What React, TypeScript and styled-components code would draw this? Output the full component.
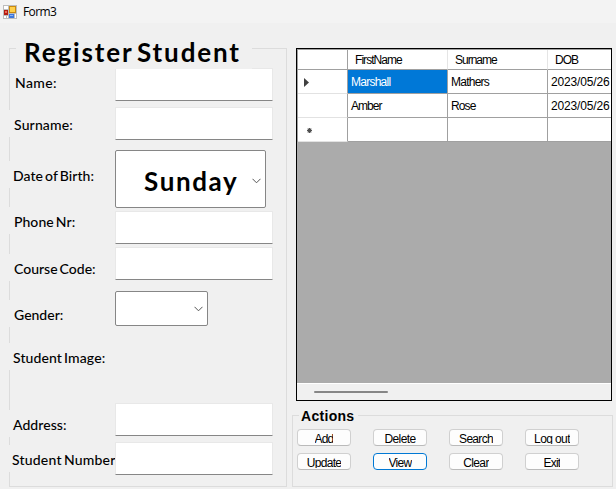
import React from "react";
import styled, { createGlobalStyle } from "styled-components";

const GlobalStyle = createGlobalStyle`
  * { box-sizing: border-box; }
  html, body { margin: 0; overflow: hidden; background: #f0f0f0; }
  button, input { font: inherit; color: inherit; margin: 0; }
`;

const line = "#dcdcdc";
const gridLine = "#a0a0a0";

const Window = styled.div`
  width: 616px;
  height: 489px;
  display: flex;
  flex-direction: column;
  background: #f0f0f0;
  color: #000;
  font-family: "Liberation Sans", Arial, sans-serif;
  font-size: 12px;
  white-space: nowrap;
  overflow: hidden;
`;

const TitleBar = styled.header`
  height: 23px;
  flex: none;
  display: flex;
  align-items: center;
  gap: 6px;
  padding-left: 3px;
  background: #f3f3f3;
  font: 12px/22px "Open Sans", sans-serif;
  letter-spacing: -0.6px;
`;

const Body = styled.main`
  flex: 1;
  display: flex;
  align-items: flex-start;
`;

const Text = styled.span<{ $spacing: number }>`
  letter-spacing: ${(p) => p.$spacing}px;
`;

/* Register form */
const RegisterGroup = styled.section`
  width: 278px;
  height: 439px;
  margin: 25px 0 0 9px;
  display: flex;
  border: 1px solid ${line};
  font-family: Lato, sans-serif;
  position: relative;
`;

const RegisterLegend = styled.h1`
  position: absolute;
  left: 6px;
  top: -14px;
  width: 236px;
  height: 34px;
  margin: 0;
  padding-left: 8px;
  background: #f0f0f0;
  font: bold 26px/34px Lato, sans-serif;
  letter-spacing: 1.85px;
  word-spacing: -4px;
`;

const LabelColumn = styled.div`
  width: 107px;
  flex: none;
  margin-left: -2px;
  padding-top: 19px;
  display: flex;
  flex-direction: column;
`;

const Label = styled.label<{ $gap?: number; $indent: number; $spacing: number; $inside?: boolean }>`
  height: 27px;
  flex: none;
  margin-top: ${(p) => p.$gap ?? 0}px;
  margin-left: ${(p) => (p.$inside ? 3 : 0)}px;
  padding-left: ${(p) => p.$indent - (p.$inside ? 3 : 0)}px;
  background: #f0f0f0;
  font: 500 14px/30px Lato, sans-serif;
  letter-spacing: ${(p) => p.$spacing}px;
  word-spacing: -1.5px;
`;

const FieldColumn = styled.div`
  padding-top: 19px;
  display: flex;
  flex-direction: column;
  align-items: flex-start;
`;

const Input = styled.input<{ $gap?: number }>`
  width: 158px;
  height: 33px;
  flex: none;
  margin-top: ${(p) => p.$gap ?? 0}px;
  border: 1px solid #e8e8e8;
  border-bottom-color: #868686;
  border-radius: 1px;
  background: #fff;
  outline: none;
`;

const DropBox = styled.div<{ $width: number; $height: number; $gap: number; $drop?: number }>`
  width: ${(p) => p.$width}px;
  height: ${(p) => p.$height}px;
  flex: none;
  margin-top: ${(p) => p.$gap}px;
  padding: ${(p) => p.$drop ?? 0}px 4px 0 28px;
  display: flex;
  align-items: center;
  justify-content: space-between;
  border: 1px solid #868686;
  border-radius: 2px;
  background: #fff;
  font: bold 26px/34px Lato, sans-serif;
  letter-spacing: 1.6px;
`;

const Chevron = () => (
  <svg width="9" height="6" viewBox="0 0 9 6" fill="none" stroke="#555" strokeWidth="1">
    <path d="M0.5 0.8 4.5 4.8 8.5 0.8" />
  </svg>
);

/* Right side */
const RightSide = styled.div`
  width: 321px;
  flex: none;
  margin: 25px 0 0 5px;
  display: flex;
  flex-direction: column;
`;

const GridView = styled.section`
  width: 316px;
  height: 353px;
  margin-left: 4px;
  display: flex;
  flex-direction: column;
  border: 1px solid #000;
  background: #ababab;
  overflow: hidden;
`;

const Table = styled.div`
  display: grid;
  grid-template-columns: 50px 100px 100px 63px;
  grid-template-rows: 20px 24px 24px 24px;
  border-top: 1px solid ${gridLine};
  border-left: 1px solid ${gridLine};
`;

const Cell = styled.div<{ $selected?: boolean }>`
  display: flex;
  align-items: center;
  padding: 1px 0 0 3px;
  border-right: 1px solid ${gridLine};
  border-bottom: 1px solid ${gridLine};
  background: ${(p) => (p.$selected ? "#0078d7" : "#fff")};
  color: ${(p) => (p.$selected ? "#fff" : "#000")};
  overflow: hidden;
  &:nth-child(4n) { border-right: 0; }
`;

const HeadCell = styled(Cell)`
  padding: 0 0 0 7px;
  border-right-color: #e5e5e5;
  &:first-child { border-right-color: ${gridLine}; }
`;

const RowHead = styled(Cell)`
  padding: 2px 0 0 6px;
  border-bottom-color: #e2e2e2;
`;

const ScrollBar = styled.div`
  height: 17px;
  margin-top: auto;
  padding: 7px 0 0 17px;
  border-top: 1px solid #fff;
  background: #f0f0f0;
`;

const Thumb = styled.div`
  width: 74px;
  height: 2px;
  border-radius: 1px;
  background: #868686;
`;

const Actions = styled.section`
  width: 321px;
  height: 72px;
  margin-top: 14px;
  padding: 13px 0 0 4px;
  border: 1px solid ${line};
  position: relative;
`;

const ActionsLegend = styled.h2`
  position: absolute;
  left: 6px;
  top: -9px;
  width: 59px;
  margin: 0;
  padding-left: 2px;
  background: #f0f0f0;
  font: bold 14px/19px "Liberation Sans", Arial, sans-serif;
  letter-spacing: 0.3px;
`;

const ButtonGrid = styled.div`
  display: grid;
  grid-template-columns: repeat(4, 54px);
  grid-auto-rows: 17px;
  gap: 7px 22px;
`;

const Button = styled.button<{ $focused?: boolean }>`
  padding: 3px 0 0;
  display: flex;
  justify-content: center;
  border: 1px solid ${(p) => (p.$focused ? "#0078d4" : "#d0d0d0")};
  border-bottom-color: ${(p) => (p.$focused ? "#0078d4" : "#bababa")};
  border-radius: 4px;
  background: #fdfdfd;
`;

const Caption = styled(Text)`
  height: 11px;
  line-height: 13px;
  overflow: hidden;
`;

const FormIcon = () => (
  <svg width="14" height="14" viewBox="0 0 14 14">
    <rect width="14" height="14" fill="#bdbdbd" />
    <path d="M1 1h4v3H1zM1 11h2v2H1zM4 11h1v2H4zM12 9h1v4h-1z" fill="#fff" />
    <rect x="6" y="1" width="7" height="7" fill="#c98a10" />
    <rect x="7" y="2" width="5" height="5" fill="#ffd04a" />
    <rect x="1" y="5" width="4" height="5" fill="#b51d12" />
    <rect x="2" y="6" width="2" height="2" fill="#ec6a55" />
    <rect x="6" y="9" width="5" height="4" fill="#3f78dc" />
    <rect x="7" y="10" width="3" height="1" fill="#8db4f5" />
  </svg>
);

const Arrow = () => (
  <svg width="6" height="9" viewBox="0 0 6 9"><path d="M0 0 5 4.5 0 9z" fill="#404040" /></svg>
);

const NewRowMark = () => (
  <svg width="7" height="7" viewBox="0 0 7 7" stroke="#505050" strokeWidth="1.2">
    <path d="M3.5 1v5M1 3.5h5M1.7 1.7l3.6 3.6M5.3 1.7 1.7 5.3" />
  </svg>
);

const MarkSlot = styled.span<{ $x: number }>`
  display: flex;
  padding-left: ${(p) => p.$x}px;
`;

const buttons: { text: string; spacing: number }[] = [
  { text: "Add", spacing: -0.8 },
  { text: "Delete", spacing: -0.6 },
  { text: "Search", spacing: -0.7 },
  { text: "Log out", spacing: -0.6 },
  { text: "Update", spacing: -0.7 },
  { text: "View", spacing: -0.7 },
  { text: "Clear", spacing: -0.6 },
  { text: "Exit", spacing: -0.8 },
];

export default function App() {
  return (
    <>
      <GlobalStyle />
      <Window>
        <TitleBar><FormIcon />Form3</TitleBar>
        <Body>
          <RegisterGroup>
            <LabelColumn>
              <Label $inside $indent={7} $spacing={0.4}>Name:</Label>
              <Label $gap={15} $indent={6} $spacing={0.15}>Surname:</Label>
              <Label $gap={24} $indent={5} $spacing={0.05}>Date of Birth:</Label>
              <Label $gap={19} $indent={6} $spacing={0.05}>Phone Nr:</Label>
              <Label $gap={20} $indent={6} $spacing={0}>Course Code:</Label>
              <Label $gap={19} $indent={6} $spacing={0}>Gender:</Label>
              <Label $gap={16} $indent={5} $spacing={0.1}>Student Image:</Label>
              <Label $gap={40} $indent={5} $spacing={0.05}>Address:</Label>
              <Label $gap={8} $indent={4} $spacing={0.2}>Student Number</Label>
            </LabelColumn>
            <FieldColumn>
              <Input />
              <Input $gap={6} />
              <DropBox $width={151} $height={58} $gap={10} $drop={3}>Sunday<Chevron /></DropBox>
              <Input $gap={3} />
              <Input $gap={3} />
              <DropBox $width={93} $height={35} $gap={11}><span /><Chevron /></DropBox>
              <Input $gap={77} />
              <Input $gap={6} />
            </FieldColumn>
            <RegisterLegend>Register Student</RegisterLegend>
          </RegisterGroup>

          <RightSide>
            <GridView>
              <Table>
                <HeadCell />
                <HeadCell><Text $spacing={-0.95}>FirstName</Text></HeadCell>
                <HeadCell><Text $spacing={-1}>Surname</Text></HeadCell>
                <HeadCell><Text $spacing={-1}>DOB</Text></HeadCell>
                <RowHead><Arrow /></RowHead>
                <Cell $selected><Text $spacing={-0.75}>Marshall</Text></Cell>
                <Cell><Text $spacing={-0.75}>Mathers</Text></Cell>
                <Cell><Text $spacing={-0.15}>2023/05/26</Text></Cell>
                <RowHead />
                <Cell><Text $spacing={-0.95}>Amber</Text></Cell>
                <Cell><Text $spacing={-0.9}>Rose</Text></Cell>
                <Cell><Text $spacing={-0.15}>2023/05/26</Text></Cell>
                <RowHead><MarkSlot $x={2}><NewRowMark /></MarkSlot></RowHead>
                <Cell /><Cell /><Cell />
              </Table>
              <ScrollBar><Thumb /></ScrollBar>
            </GridView>
            <Actions>
              <ActionsLegend>Actions</ActionsLegend>
              <ButtonGrid>
                {buttons.map((b) => (
                  <Button key={b.text} $focused={b.text === "View"}>
                    <Caption $spacing={b.spacing}>{b.text}</Caption>
                  </Button>
                ))}
              </ButtonGrid>
            </Actions>
          </RightSide>
        </Body>
      </Window>
    </>
  );
}
